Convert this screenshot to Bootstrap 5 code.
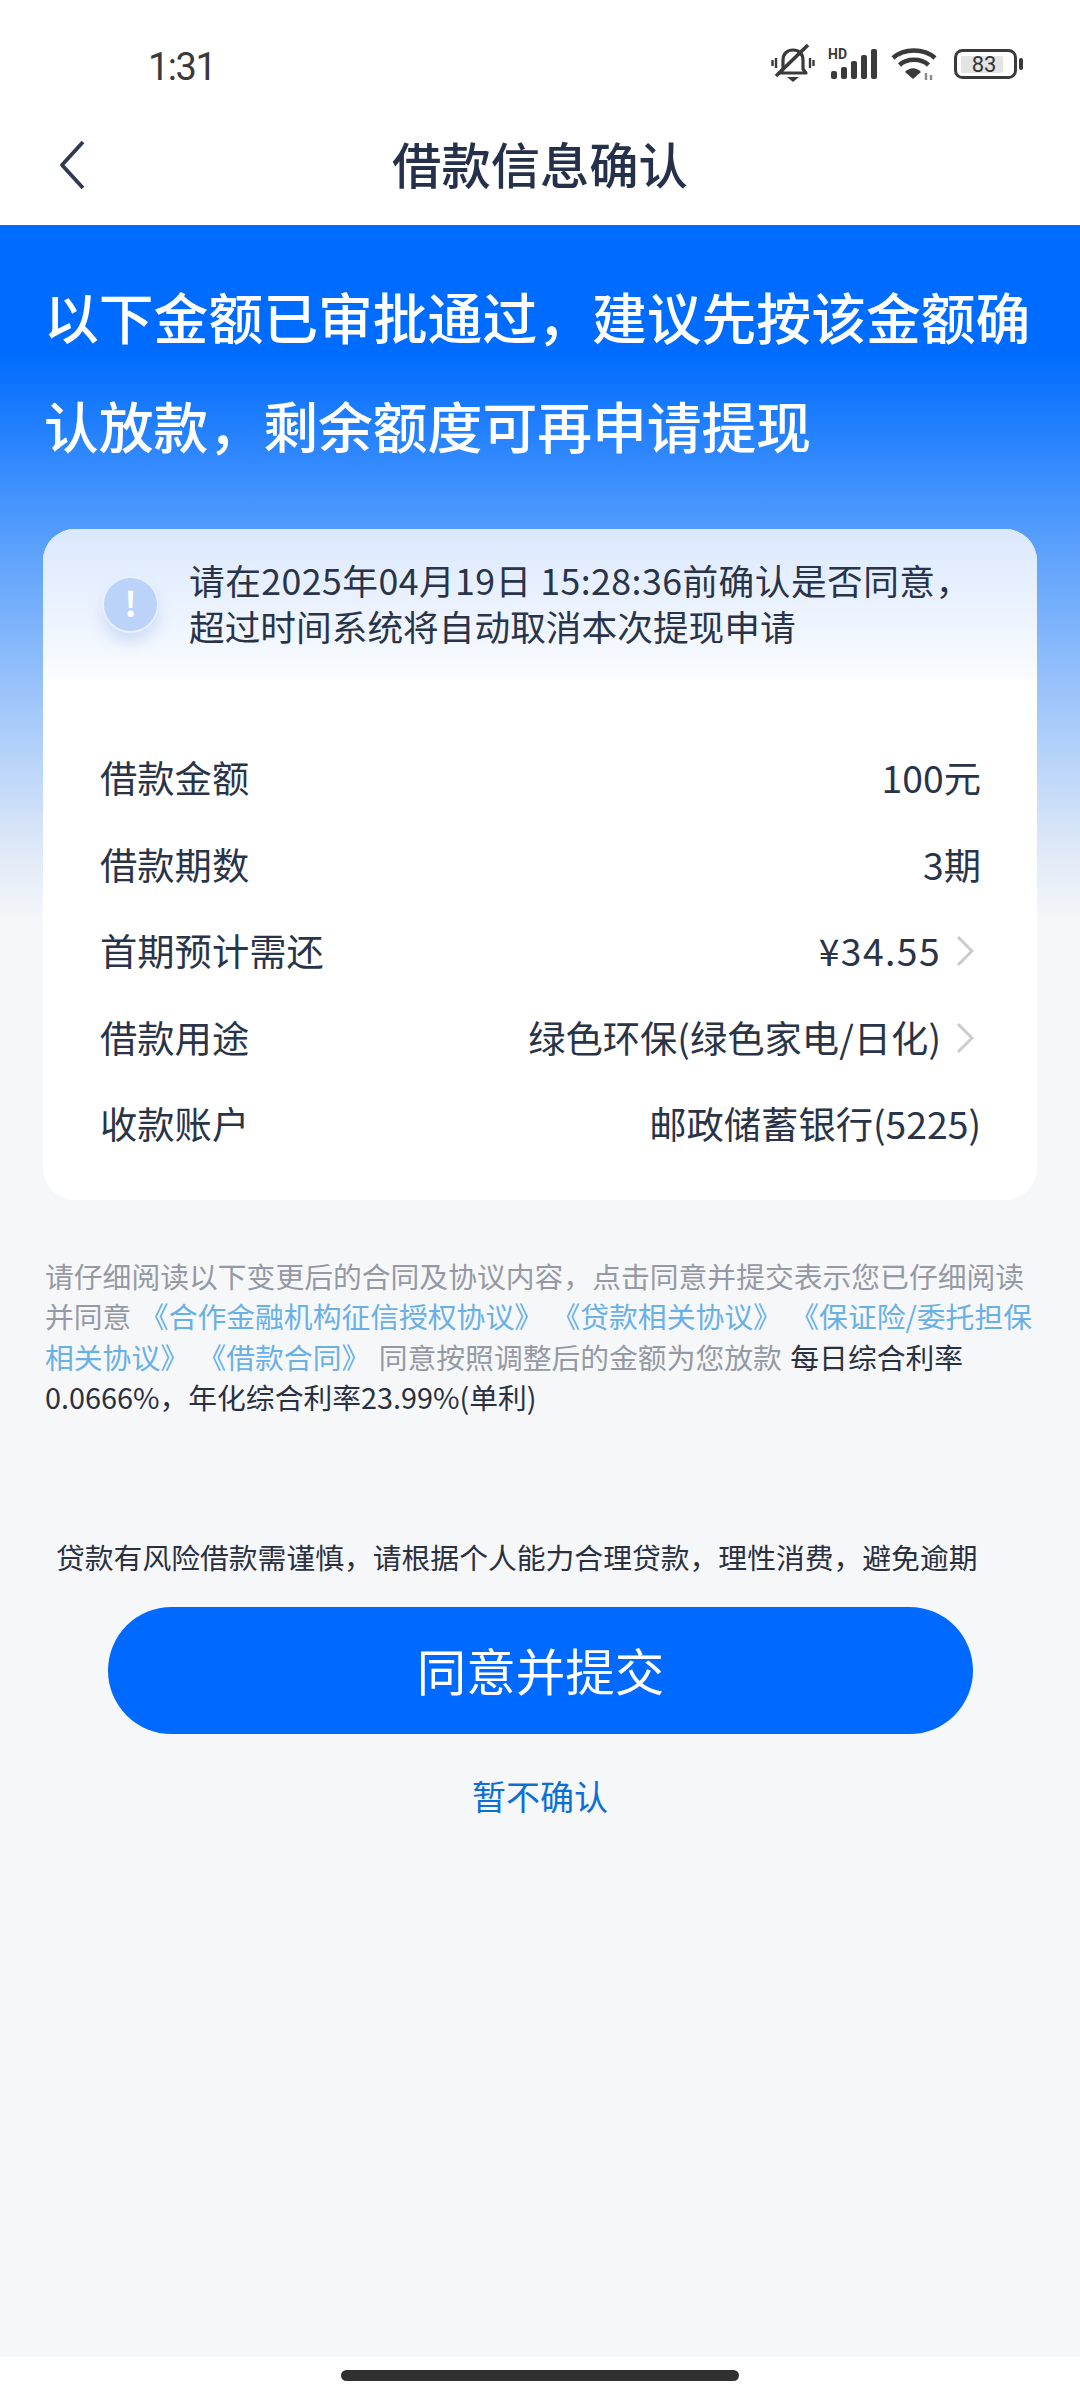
<!DOCTYPE html>
<html lang="zh-CN">
<head>
  <meta charset="UTF-8">
  <meta name="viewport" content="width=device-width, initial-scale=1">
  <title>借款信息确认</title>
  <link href="https://cdn.jsdelivr.net/npm/bootstrap@5.3.0/dist/css/bootstrap.min.css" rel="stylesheet">
  <style>
    body {
      font-family: "Noto Sans CJK SC", "Noto Sans", sans-serif;
      background: #fff;
      color: #2a3448;
    }
    .phone { width: 1080px; height: 2400px; }
    .status-bar { height: 100px; padding: 44px 57px 0 148px; }
    .status-time { font-family: Roboto, sans-serif; font-size: 38px; color: #3a3a3a; letter-spacing: -1.5px; line-height: 1; }
    .status-icons { gap: 13px; }
    .signal-icon { margin-top: -4px; }
    .top-nav { height: 125px; position: relative; }
    .top-nav h1 { font-size: 49.3px; font-weight: 500; color: #25304a; margin: 0; line-height: 1; }
    .back-btn { position: absolute; left: 56px; top: 39px; }
    .main-area {
      height: 2132px;
      padding: 0 43px;
      background: linear-gradient(#006cff 0, #006cff 130px, #5aa0fc 320px, #a3c8fa 485px, #e1eaf7 630px, #f6f7f9 700px);
    }
    .head-text { font-size: 54.8px; line-height: 108.5px; color: #fff; font-weight: 500; padding: 36px 0 0 1px; height: 304px; white-space: nowrap; }
    .info-card { background: #fff; border-radius: 32px; overflow: hidden; width: 994px; height: 671px; }
    .notice { height: 151px; background: linear-gradient(#dbe8fd, #fafcff); padding: 0 0 2px 59px; gap: 30px; font-size: 35.7px; line-height: 46px; white-space: nowrap; }
    .notice-icon {
      width: 57px; height: 57px; border-radius: 50%;
      background: #bbd3f8; border: 2px solid #e6f0fe; color: #fff;
      font-size: 34px; font-weight: 700; line-height: 50px; text-align: center;
      box-shadow: 0 10px 14px rgba(120, 160, 225, .25);
      margin-top: 2px;
    }
    .notice-first { letter-spacing: .45px; margin-top: -2px; }
    .rows { padding: 55px 56px 0 57px; }
    .row-item { height: 86.5px; font-size: 37.3px; }
    .val-num { letter-spacing: 1.4px; }
    .chev { margin-left: 15px; margin-right: 7px; }
    .terms { font-size: 28.8px; line-height: 40.4px; color: #9599a3; padding: 56px 0 0 2px; height: 337px; word-spacing: 2px; white-space: nowrap; }
    .terms a { color: #68b0e6; text-decoration: none; }
    .terms b { color: #2a3040; font-weight: 400; }
    .risk { font-size: 28.8px; line-height: 40px; color: #2a3040; padding-left: 13px; white-space: nowrap; }
    .btn-submit {
      display: block; width: 865px; height: 127px; margin: 30px 0 0 65px;
      background: #0069ff; border: 0; border-radius: 64px; padding-bottom: 8px;
      color: #fff; font-size: 49.5px; line-height: 1;
    }
    .btn-later { font-size: 34px; color: #0c6fd6; text-align: center; margin-top: 37px; line-height: 50px; text-decoration: none; display: block; width: 994px; }
    .home-zone { height: 43px; }
    .home-bar { width: 398px; height: 11px; background: #303030; border-radius: 6px; margin-top: 13px; }
  </style>
</head>
<body>
<div class="phone d-flex flex-column">

  <!-- status bar -->
  <div class="status-bar d-flex justify-content-between align-items-start">
    <div class="status-time mt-1">1:31</div>
    <div class="status-icons d-flex align-items-center">
      <svg width="44" height="39" viewBox="0 0 44 39" fill="none" stroke="#3a3a3a" stroke-width="3.2">
        <path d="M9 29 l3-4 v-9 c0-6 4-10 10-10 s10 4 10 10 v9 l3 4z" stroke-linejoin="round"/>
        <path d="M16 33 h12 l-6 5z" fill="#3a3a3a" stroke="none"/>
        <path d="M5 32 L37 1" stroke-width="3.6"/>
        <path d="M5 14 v10 M1.500 16 v6 M39 14 v10 M42.500 16 v6" stroke-width="2.4"/>
      </svg>
      <svg class="signal-icon" width="50" height="35" viewBox="0 0 50 35">
        <text x="0" y="15" font-family="Roboto, sans-serif" font-weight="700" font-size="14" fill="#3a3a3a">HD</text>
        <rect x="3" y="27" width="6" height="8" rx="2" fill="#3a3a3a"/>
        <rect x="13" y="23" width="6" height="12" rx="2" fill="#3a3a3a"/>
        <rect x="23" y="17" width="6" height="18" rx="2" fill="#3a3a3a"/>
        <rect x="33" y="11" width="6" height="24" rx="2" fill="#3a3a3a"/>
        <rect x="43" y="5" width="6" height="30" rx="2" fill="#3a3a3a"/>
      </svg>
      <svg width="46" height="34" viewBox="0 0 46 34" fill="none" stroke="#3a3a3a" stroke-width="4.500">
        <path d="M2 11 C13 1 33 1 44 11"/>
        <path d="M8.500 18 C16 11 30 11 37.500 18"/>
        <path d="M22 32 L14 25 C19 20 25 20 30 25z" fill="#3a3a3a" stroke="none"/>
        <path d="M35 26 v7 M40 28 v5" stroke-width="2.400" stroke="#888"/>
      </svg>
      <svg width="69" height="30" viewBox="0 0 69 30" class="ms-1">
        <rect x="1.500" y="1.500" width="60" height="27" rx="7" fill="#fff" stroke="#3a3a3a" stroke-width="3"/>
        <rect x="7" y="7" width="42" height="17" rx="2" fill="#e4e4e4"/>
        <text x="30" y="23" text-anchor="middle" font-family="Roboto, sans-serif" font-size="22" fill="#333">83</text>
        <rect x="65" y="9" width="4" height="12" rx="2" fill="#3a3a3a"/>
      </svg>
    </div>
  </div>

  <!-- title bar -->
  <div class="top-nav d-flex align-items-center justify-content-center">
    <svg class="back-btn" width="32" height="52" viewBox="0 0 32 52" fill="none" stroke="#2f3a52" stroke-width="3.800">
      <path d="M27 3 L6 26 L27 49" stroke-linejoin="round"/>
    </svg>
    <h1>借款信息确认</h1>
  </div>

  <div class="main-area">
    <div class="head-text">以下金额已审批通过，建议先按该金额确<br>认放款，剩余额度可再申请提现</div>

    <div class="info-card">
      <div class="notice d-flex align-items-center">
        <div class="notice-icon flex-shrink-0">!</div>
        <div>
          <div class="notice-first">请在2025年04月19日 15:28:36前确认是否同意，</div>
          <div>超过时间系统将自动取消本次提现申请</div>
        </div>
      </div>
      <div class="rows">
        <div class="row-item d-flex justify-content-between align-items-center"><span>借款金额</span><span>100元</span></div>
        <div class="row-item d-flex justify-content-between align-items-center"><span>借款期数</span><span>3期</span></div>
        <div class="row-item d-flex justify-content-between align-items-center"><span>首期预计需还</span><span class="d-flex align-items-center"><span class="val-num">¥34.55</span><svg class="chev" width="18" height="32" viewBox="0 0 18 32" fill="none" stroke="#c9cbcf" stroke-width="3"><path d="M2 2 L16 16 L2 30"/></svg></span></div>
        <div class="row-item d-flex justify-content-between align-items-center"><span>借款用途</span><span class="d-flex align-items-center">绿色环保(绿色家电/日化)<svg class="chev" width="18" height="32" viewBox="0 0 18 32" fill="none" stroke="#c9cbcf" stroke-width="3"><path d="M2 2 L16 16 L2 30"/></svg></span></div>
        <div class="row-item d-flex justify-content-between align-items-center"><span>收款账户</span><span>邮政储蓄银行(5225)</span></div>
      </div>
    </div>

    <div class="terms">
      <div>请仔细阅读以下变更后的合同及协议内容，点击同意并提交表示您已仔细阅读</div>
      <div>并同意 <a href="#">《合作金融机构征信授权协议》</a> <a href="#">《贷款相关协议》</a> <a href="#">《保证险/委托担保</a></div>
      <div><a href="#">相关协议》</a> <a href="#">《借款合同》</a> 同意按照调整后的金额为您放款 <b>每日综合利率</b></div>
      <div><b>0.0666%，年化综合利率23.99%(单利)</b></div>
    </div>

    <div class="risk">贷款有风险借款需谨慎，请根据个人能力合理贷款，理性消费，避免逾期</div>
    <button class="btn btn-submit" type="button">同意并提交</button>
    <a class="btn-later" href="#">暂不确认</a>
  </div>

  <div class="home-zone d-flex justify-content-center">
    <div class="home-bar"></div>
  </div>
</div>
<script src="https://cdn.jsdelivr.net/npm/bootstrap@5.3.0/dist/js/bootstrap.bundle.min.js"></script>
</body>
</html>
